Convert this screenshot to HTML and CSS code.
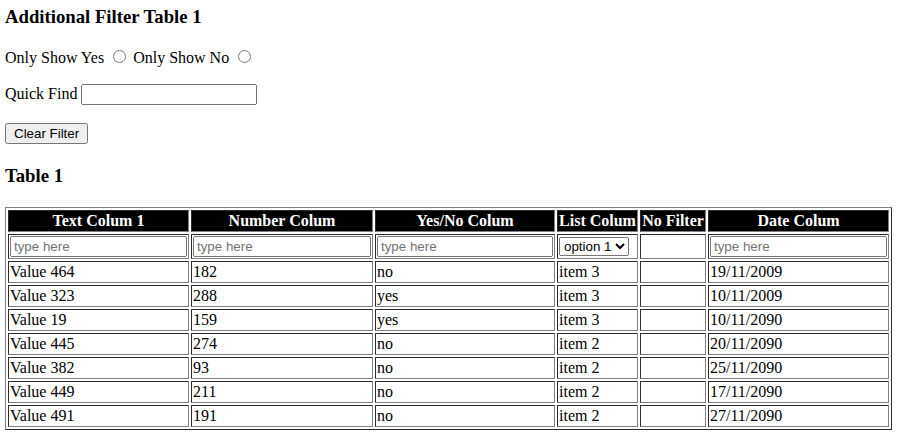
FILE: index.html
```html
<!DOCTYPE html>
<html>
<head>
<meta charset="utf-8">
<title>Additional Filter Table 1</title>
<link rel="stylesheet" href="styles.css">
</head>
<body>
<h3 class="title">Additional Filter Table 1</h3>
<p class="line">Only Show Yes <input type="radio" name="yn" class="radio"> Only Show No <input type="radio" name="yn" class="radio"></p>
<p class="line quick-line">Quick Find <input type="text" class="quick"></p>
<p class="line btn-line"><button class="btn">Clear Filter</button></p>
<h3 class="heading">Table 1</h3>
<table class="grid">
  <thead>
    <tr class="head">
      <th class="c1">Text Colum 1</th>
      <th class="c2">Number Colum</th>
      <th class="c3">Yes/No Colum</th>
      <th class="c4">List Colum</th>
      <th class="c5">No Filter</th>
      <th class="c6">Date Colum</th>
    </tr>
    <tr class="filters">
      <td><input type="text" class="f-input" placeholder="type here"></td>
      <td><input type="text" class="f-input" placeholder="type here"></td>
      <td><input type="text" class="f-input" placeholder="type here"></td>
      <td><select class="f-select"><option>option 1</option><option>option 2</option></select></td>
      <td></td>
      <td><input type="text" class="f-input" placeholder="type here"></td>
    </tr>
  </thead>
  <tbody>
    <tr><td>Value 464</td><td>182</td><td>no</td><td>item 3</td><td></td><td>19/11/2009</td></tr>
    <tr><td>Value 323</td><td>288</td><td>yes</td><td>item 3</td><td></td><td>10/11/2009</td></tr>
    <tr><td>Value 19</td><td>159</td><td>yes</td><td>item 3</td><td></td><td>10/11/2090</td></tr>
    <tr><td>Value 445</td><td>274</td><td>no</td><td>item 2</td><td></td><td>20/11/2090</td></tr>
    <tr><td>Value 382</td><td>93</td><td>no</td><td>item 2</td><td></td><td>25/11/2090</td></tr>
    <tr><td>Value 449</td><td>211</td><td>no</td><td>item 2</td><td></td><td>17/11/2090</td></tr>
    <tr><td>Value 491</td><td>191</td><td>no</td><td>item 2</td><td></td><td>27/11/2090</td></tr>
  </tbody>
</table>
</body>
</html>
```
FILE: styles.css
```css
body {
  margin: 0 5px;
  font-family: "Liberation Serif", "Times New Roman", serif;
  font-size: 16px;
  color: #000;
  background: #fff;
}
.title {
  margin-top: 6px;
}
.quick-line {
  margin-top: 17px;
}
.btn-line {
  margin-top: 18px;
}
.heading {
  margin-top: 21px;
  margin-bottom: 20px;
}
.quick {
  width: 176px;
  height: 21px;
  box-sizing: border-box;
  font-family: "Liberation Sans", Arial, sans-serif;
}
.btn {
  font-family: "Liberation Sans", Arial, sans-serif;
  height: 21px;
  padding: 1px 7px;
}
.grid {
  border: 1px outset grey;
  border-spacing: 2px;
  width: 887px;
}
.grid th,
.grid td {
  border: 1px inset grey;
  padding: 1px;
  text-align: left;
  white-space: nowrap;
}
.grid .head th {
  background: #000;
  color: #fff;
  text-align: center;
  font-weight: bold;
}
.c1 { width: 177px; }
.c2 { width: 178px; }
.c3 { width: 176px; }
.c4 { width: 77px; }
.c5 { width: 62px; }
.c6 { width: 177px; }
.f-input {
  width: 100%;
  box-sizing: border-box;
  margin: 0;
  font-family: "Liberation Sans", Arial, sans-serif;
}
.f-select {
  font-family: "Liberation Sans", Arial, sans-serif;
  margin: 0;
}
```
